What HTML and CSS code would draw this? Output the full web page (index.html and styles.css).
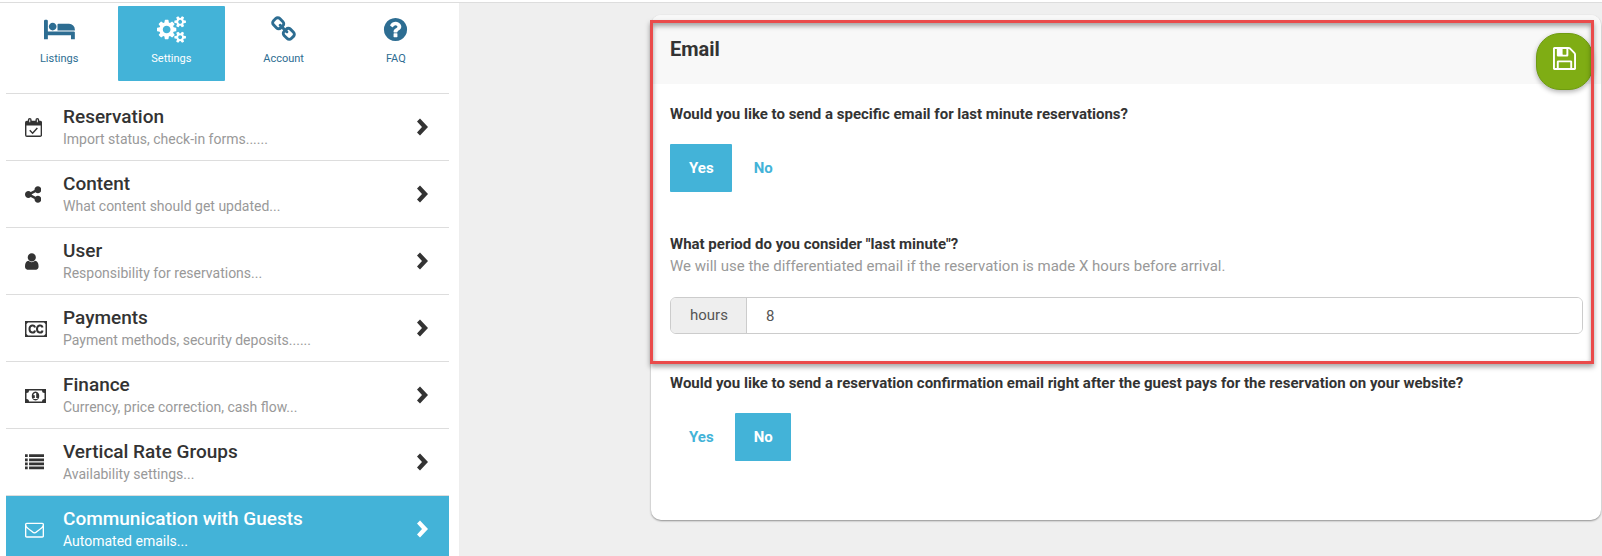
FILE: index.html
```
<!DOCTYPE html>
<html lang="en">
<head>
<meta charset="UTF-8">
<meta name="viewport" content="width=device-width, initial-scale=1.0">
<title>Settings - Communication with Guests</title>
<link rel="stylesheet" href="styles.css">
</head>
<body>
<!-- shared chevron, used by every menu row -->
<svg class="sprite" aria-hidden="true">
  <symbol id="chevron" viewBox="0 0 11 18"><path d="M3 0.5L11 9L3 17.5L0 14.5L5 9L0 3.5z"/></symbol>
</svg>
<div class="page">
  <aside class="sidebar">
    <nav class="tabs">
      <a href="#" class="tab">
        <svg class="tab-icon" viewBox="0 0 2048 1792"><path d="M256 1024h1728q26 0 45 19t19 45v448h-256v-256h-1536v256h-256v-1216q0-26 19-45t45-19h128q26 0 45 19t19 45v704zm576-320q0-106-75-181t-181-75-181 75-75 181 75 181 181 75 181-75 75-181zm1216 256v-64q0-159-112.5-271.5t-271.5-112.5h-704q-26 0-45 19t-19 45v384h1152z"/></svg>
        <span>Listings</span>
      </a>
      <a href="#" class="tab active">
        <svg class="tab-icon" viewBox="-64 0 1920 1792"><path d="M832 896q0-106-75-181t-181-75-181 75-75 181 75 181 181 75 181-75 75-181zm768 512q0-52-38-90t-90-38-90 38-38 90q0 53 37.5 90.5t90.5 37.5 90.5-37.5 37.5-90.5zm0-1024q0-52-38-90t-90-38-90 38-38 90q0 53 37.5 90.5t90.5 37.5 90.5-37.5 37.5-90.5zm-384 421v185q0 10-7 19.5t-16 10.5l-155 24q-11 35-32 76 34 48 90 115 7 11 7 20 0 12-7 19-23 30-82.5 89.5t-78.5 59.5q-11 0-21-7l-115-90q-37 19-77 31-11 108-23 155-7 24-30 24h-186q-11 0-20-7.5t-10-17.5l-23-153q-34-10-75-31l-118 89q-7 7-20 7-11 0-21-8-144-133-144-160 0-9 7-19 10-14 41-53t47-61q-23-44-35-82l-152-24q-10-1-17-9.5t-7-19.5v-185q0-10 7-19.5t16-10.5l155-24q11-35 32-76-34-48-90-115-7-11-7-20 0-12 7-20 22-30 82-89t79-59q11 0 21 7l115 90q34-18 77-32 11-108 23-154 7-24 30-24h186q11 0 20 7.5t10 17.5l23 153q34 10 75 31l118-89q8-7 20-7 11 0 21 8 144 133 144 160 0 8-7 19-12 16-42 54t-45 60q23 48 34 82l152 23q10 2 17 10.5t7 19.5zm640 533v140q0 16-149 31-12 27-30 52 51 113 51 138 0 4-4 7-122 71-124 71-8 0-46-47t-52-68q-20 2-30 2t-30-2q-14 21-52 68t-46 47q-2 0-124-71-4-3-4-7 0-25 51-138-18-25-30-52-149-15-149-31v-140q0-16 149-31 13-29 30-52-51-113-51-138 0-4 4-7 4-2 35-20t59-34 30-16q8 0 46 46.5t52 67.5q20-2 30-2t30 2q51-71 92-112l6-2q4 0 124 70 4 3 4 7 0 25-51 138 17 23 30 52 149 15 149 31zm0-1024v140q0 16-149 31-12 27-30 52 51 113 51 138 0 4-4 7-122 71-124 71-8 0-46-47t-52-68q-20 2-30 2t-30-2q-14 21-52 68t-46 47q-2 0-124-71-4-3-4-7 0-25 51-138-18-25-30-52-149-15-149-31v-140q0-16 149-31 13-29 30-52-51-113-51-138 0-4 4-7 4-2 35-20t59-34 30-16q8 0 46 46.5t52 67.5q20-2 30-2t30 2q51-71 92-112l6-2q4 0 124 70 4 3 4 7 0 25-51 138 17 23 30 52 149 15 149 31z"/></svg>
        <span>Settings</span>
      </a>
      <a href="#" class="tab">
        <svg class="tab-icon" viewBox="0 0 1792 1792"><path d="M1520 1216q0-40-28-68l-208-208q-28-28-68-28-42 0-72 32 3 3 19 18.5t21.5 21.5 15 19 13 25.5 3.5 27.5q0 40-28 68t-68 28q-15 0-27.5-3.5t-25.5-13-19-15-21.5-21.5-18.5-19q-33 31-33 73 0 40 28 68l206 207q27 27 68 27 40 0 68-26l147-146q28-28 28-67zm-703-705q0-40-28-68l-206-207q-28-28-68-28-39 0-68 27l-147 146q-28 28-28 67 0 40 28 68l208 208q27 27 68 27 42 0 72-31-3-3-19-18.5t-21.5-21.5-15-19-13-25.5-3.5-27.5q0-40 28-68t68-28q15 0 27.5 3.5t25.5 13 19 15 21.5 21.5 18.5 19q33-31 33-73zm895 705q0 120-85 203l-147 146q-83 83-203 83-121 0-204-85l-206-207q-83-83-83-203 0-123 88-209l-88-88q-86 88-208 88-120 0-204-84l-208-208q-84-84-84-204t85-203l147-146q83-83 203-83 121 0 204 85l206 207q83 83 83 203 0 123-88 209l88 88q86-88 208-88 120 0 204 84l208 208q84 84 84 204z"/></svg>
        <span>Account</span>
      </a>
      <a href="#" class="tab">
        <svg class="tab-icon" viewBox="0 0 1792 1792"><path d="M1024 1376v-192q0-14-9-23t-23-9h-192q-14 0-23 9t-9 23v192q0 14 9 23t23 9h192q14 0 23-9t9-23zm256-672q0-88-55.5-163t-138.5-116-170-41q-243 0-371 213-15 24 8 42l132 100q7 6 19 6 16 0 25-12 53-68 86-92 34-24 86-24 48 0 85.5 26t37.5 59q0 38-20 61t-68 45q-63 28-115.5 86.5t-52.5 125.5v36q0 14 9 23t23 9h192q14 0 23-9t9-23q0-19 21.5-49.5t54.5-49.5q32-18 49-28.5t46-35 44.5-48 28-60.5 12.5-81zm384 192q0 209-103 385.5t-279.5 279.5-385.5 103-385.5-103-279.5-279.5-103-385.5 103-385.5 279.5-279.5 385.5-103 385.5 103 279.5 279.5 103 385.5z"/></svg>
        <span>FAQ</span>
      </a>
    </nav>

    <nav class="menu">
      <a href="#" class="menu-item">
        <svg class="menu-icon" viewBox="0 0 18 20"><path fill-rule="evenodd" d="M2 3h1V2a2 2 0 0 1 4 0v1h4V2a2 2 0 0 1 4 0v1h1a2 2 0 0 1 2 2v13a2 2 0 0 1-2 2H2a2 2 0 0 1-2-2V5a2 2 0 0 1 2-2zM1.500 8v10.500h15V8zM4.500 1.500v3h1v-3zM12.500 1.500v3h1v-3z"/><path d="M5 13l3 3 5-5.500" fill="none" stroke="currentColor" stroke-width="1.500"/></svg>
        <span class="menu-text"><span class="menu-title">Reservation</span><span class="menu-sub">Import status, check-in forms......</span></span>
        <svg class="chevron"><use href="#chevron"/></svg>
      </a>
      <a href="#" class="menu-item">
        <svg class="menu-icon" viewBox="128 0 1536 1792"><path d="M1344 1024q133 0 226.500 93.500t93.500 226.500-93.500 226.500-226.500 93.500-226.500-93.500-93.500-226.500q0-12 2-34l-360-180q-92 86-218 86-133 0-226.500-93.500t-93.500-226.500 93.500-226.500 226.500-93.500q126 0 218 86l360-180q-2-22-2-34 0-133 93.500-226.500t226.500-93.500 226.500 93.500 93.500 226.500-93.500 226.500-226.500 93.500q-126 0-218-86l-360 180q2 22 2 34t-2 34l360 180q92-86 218-86z"/></svg>
        <span class="menu-text"><span class="menu-title">Content</span><span class="menu-sub">What content should get updated...</span></span>
        <svg class="chevron"><use href="#chevron"/></svg>
      </a>
      <a href="#" class="menu-item">
        <svg class="menu-icon" viewBox="256 0 1280 1792"><path d="M1536 1399q0 109-62.500 187t-150.500 78h-854q-88 0-150.500-78t-62.500-187q0-85 8.500-160.500t31.500-152 58.500-131 94-89 134.500-34.500q131 128 313 128t313-128q76 0 134.500 34.500t94 89 58.500 131 31.500 152 8.500 160.500zm-256-887q0 159-112.500 271.500t-271.500 112.500-271.500-112.500-112.500-271.500 112.500-271.500 271.500-112.500 271.500 112.500 112.500 271.500z"/></svg>
        <span class="menu-text"><span class="menu-title">User</span><span class="menu-sub">Responsibility for reservations...</span></span>
        <svg class="chevron"><use href="#chevron"/></svg>
      </a>
      <a href="#" class="menu-item">
        <svg class="menu-icon" viewBox="0 0 22 19"><path fill-rule="evenodd" d="M0 2h22v16H0zM3 3.500L1.500 5v10L3 16.500h16l1.500-1.500V5L19 3.500z"/><path d="M10 8.500C9.500 5.500 4.500 5.500 4.500 10s5 4.500 5.500 1.500M17.500 8.500C17 5.500 12 5.500 12 10s5 4.500 5.500 1.500" fill="none" stroke="currentColor" stroke-width="2"/></svg>
        <span class="menu-text"><span class="menu-title">Payments</span><span class="menu-sub">Payment methods, security deposits......</span></span>
        <svg class="chevron"><use href="#chevron"/></svg>
      </a>
      <a href="#" class="menu-item">
        <svg class="menu-icon" viewBox="0 0 21 19"><path fill-rule="evenodd" d="M0 3h21v14H0zM4 4.500a2.500 2.500 0 0 1-2.500 2.500v6A2.500 2.500 0 0 1 4 15.500h13a2.500 2.500 0 0 1 2.500-2.500V7A2.500 2.500 0 0 1 17 4.500z"/><path fill-rule="evenodd" d="M10.500 5.500c5 0 5 9 0 9s-5-9 0-9zM10 7L8.500 8.200v1.100h1.300V12H8.500v1h4v-1h-1.300V7z"/></svg>
        <span class="menu-text"><span class="menu-title">Finance</span><span class="menu-sub">Currency, price correction, cash flow...</span></span>
        <svg class="chevron"><use href="#chevron"/></svg>
      </a>
      <a href="#" class="menu-item">
        <svg class="menu-icon" viewBox="0 0 1792 1792"><path d="M0 128h256v256H0zM384 128h1408v256H384zM0 512h256v256H0zM384 512h1408v256H384zM0 896h256v256H0zM384 896h1408v256H384zM0 1280h256v256H0zM384 1280h1408v256H384z"/></svg>
        <span class="menu-text"><span class="menu-title">Vertical Rate Groups</span><span class="menu-sub">Availability settings...</span></span>
        <svg class="chevron"><use href="#chevron"/></svg>
      </a>
      <a href="#" class="menu-item active">
        <svg class="menu-icon" viewBox="0 0 1792 1792"><path d="M1664 1504v-768q-32 36-69 66-268 206-426 338-51 43-83 67t-86.500 48.500-102.500 24.500h-2q-48 0-102.500-24.500t-86.500-48.500-83-67q-158-132-426-338-37-30-69-66v768q0 13 9.500 22.500t22.500 9.500h1472q13 0 22.500-9.500t9.500-22.500zm0-1051v-24.500l-.5-13-3-12.500-5.500-9-9-7.500-14-2.500h-1472q-13 0-22.500 9.500t-9.500 22.500q0 168 147 284 193 152 401 317 6 5 35 29.500t46 37.500 44.500 31.500 50.500 27.500 43 9h2q20 0 43-9t50.500-27.500 44.500-31.500 46-37.500 35-29.500q208-165 401-317 54-43 100.500-115.500t46.500-131.500zm128-37v1088q0 66-47 113t-113 47h-1472q-66 0-113-47t-47-113v-1088q0-66 47-113t113-47h1472q66 0 113 47t47 113z"/></svg>
        <span class="menu-text"><span class="menu-title">Communication with Guests</span><span class="menu-sub">Automated emails...</span></span>
        <svg class="chevron"><use href="#chevron"/></svg>
      </a>
    </nav>
  </aside>

  <main class="content">
    <form class="card">
      <div class="card-header">
        <h2>Email</h2>
        <button type="button" class="save-btn" aria-label="Save">
          <svg viewBox="128 128 1536 1536"><path d="M512 1536h768v-384h-768v384zm896 0h128v-896q0-14-10-38.500t-20-34.500l-281-281q-10-10-34-20t-39-10v416q0 40-28 68t-68 28h-576q-40 0-68-28t-28-68v-416h-128v1280h128v-416q0-40 28-68t68-28h832q40 0 68 28t28 68v416zm-384-928v-320q0-13-9.500-22.500t-22.500-9.500h-192q-13 0-22.500 9.500t-9.500 22.500v320q0 13 9.500 22.500t22.500 9.500h192q13 0 22.500-9.500t9.500-22.500zm640 32v928q0 40-28 68t-68 28h-1344q-40 0-68-28t-28-68v-1344q0-40 28-68t68-28h928q40 0 88 20t76 48l280 280q28 28 48 76t20 88z"/></svg>
        </button>
      </div>
      <div class="card-body">
        <div class="field">
          <p class="question">Would you like to send a specific email for last minute reservations?</p>
          <div class="toggle">
            <button type="button" class="toggle-btn selected">Yes</button>
            <button type="button" class="toggle-btn">No</button>
          </div>
        </div>
        <div class="field period-field">
          <label class="question" for="period">What period do you consider "last minute"?</label>
          <p class="hint">We will use the differentiated email if the reservation is made X hours before arrival.</p>
          <div class="input-group">
            <span class="addon">hours</span>
            <input type="text" id="period" name="period" value="8">
          </div>
        </div>
        <div class="field">
          <p class="question">Would you like to send a reservation confirmation email right after the guest pays for the reservation on your website?</p>
          <div class="toggle">
            <button type="button" class="toggle-btn">Yes</button>
            <button type="button" class="toggle-btn selected">No</button>
          </div>
        </div>
      </div>
      <!-- red frame around the last minute settings -->
      <div class="highlight"></div>
    </form>
  </main>
</div>
</body>
</html>
```
FILE: styles.css
```
* {
  box-sizing: border-box;
}
body {
  margin: 0;
  padding-top: 2px;
  background-color: #ffffff;
  color: #333333;
  font-family: Roboto, sans-serif;
  font-size: 15px;
  line-height: 22px;
  overflow: hidden;
}
h2, p {
  margin: 0;
}
a {
  text-decoration: none;
}
svg {
  fill: currentColor;
}
.sprite {
  display: none;
}
.page {
  display: flex;
  min-height: 100vh;
  border-top: 1px solid #dddddd;
}

/* left column */
.sidebar {
  width: 460px;
  flex-shrink: 0;
  padding: 3px 10px 0 6px;
  border-right: 1px solid #eeeeee;
}
.tabs {
  display: grid;
  grid-template-columns: repeat(4, 1fr);
  gap: 6px;
  margin-bottom: 12px;
}
.tab {
  display: flex;
  flex-direction: column;
  align-items: center;
  height: 75px;
  padding-top: 10px;
  border-radius: 1px;
  color: #2d6d92;
  font-size: 11px;
}
.tab-icon {
  height: 27px;
  margin-bottom: 5px;
}
.tab.active,
.menu-item.active {
  background-color: #43b3d8;
  color: #ffffff;
}
.menu-item {
  display: grid;
  grid-template-columns: 38px 1fr 11px;
  align-items: center;
  height: 67px;
  padding: 0 21px 0 19px;
  border-top: 1px solid #dddddd;
  color: #333333;
}
.menu-icon {
  height: 19px;
}
.menu-title {
  display: block;
  font-size: 19px;
  font-weight: 500;
  line-height: 24px;
}
.menu-sub {
  display: block;
  color: #999999;
  font-size: 14px;
  line-height: 20px;
}
.active .menu-sub {
  color: #ffffff;
}
.chevron {
  width: 11px;
  height: 18px;
}

/* settings card */
.content {
  flex: 1;
  padding: 12px 1px 36px 191px;
  background-color: #efefef;
}
.card {
  position: relative;
  background-color: #ffffff;
  border-radius: 10px;
  box-shadow: 0 1px 2px rgba(0, 0, 0, 0.4);
}
.card-header {
  display: flex;
  justify-content: space-between;
  height: 69px;
  padding: 18px 8px 0 19px;
  border-radius: 10px 10px 0 0;
  background-color: #f8f8f8;
}
.card-header h2 {
  font-size: 20px;
  font-weight: 700;
  line-height: 32px;
}
.save-btn {
  width: 57px;
  height: 57px;
  padding: 0 0 4px;
  border: 1px solid #6f9c12;
  border-radius: 24px;
  background-color: #7fad14;
  color: #ffffff;
  box-shadow: 0 2px 5px rgba(0, 0, 0, 0.3);
  cursor: pointer;
}
.save-btn svg {
  width: 23px;
  height: 23px;
}
.card-body {
  padding: 19px 18px 59px 19px;
}
.field {
  margin-bottom: 41px;
}
.period-field {
  margin-bottom: 38px;
}
.field:last-child {
  margin-bottom: 0;
}
.question {
  display: block;
  font-weight: 700;
}
.hint {
  color: #999999;
}
.toggle {
  display: flex;
  gap: 3px;
  margin-top: 19px;
}
.toggle-btn {
  height: 48px;
  padding: 0 18px 0 19px;
  border: 0;
  border-radius: 1px;
  background-color: transparent;
  color: #43b3d8;
  font: inherit;
  font-weight: 700;
  cursor: pointer;
}
.toggle-btn.selected {
  background-color: #43b3d8;
  color: #ffffff;
}
.input-group {
  display: flex;
  height: 37px;
  margin-top: 20px;
  border: 1px solid #cccccc;
  border-radius: 6px;
  overflow: hidden;
}
.addon {
  padding: 6px 18px 6px 19px;
  border-right: 1px solid #cccccc;
  background-color: #eeeeee;
  color: #555555;
}
.input-group input {
  flex: 1;
  padding: 0 19px;
  border: 0;
  background-color: #ffffff;
  color: #555555;
  font: inherit;
}
.highlight {
  position: absolute;
  top: 5px;
  right: 7px;
  left: -1px;
  height: 344px;
  border: 3px solid #ea4b4b;
  box-shadow: 0 3px 5px rgba(0, 0, 0, 0.35), inset 0 3px 5px rgba(0, 0, 0, 0.35);
  pointer-events: none;
}
```
